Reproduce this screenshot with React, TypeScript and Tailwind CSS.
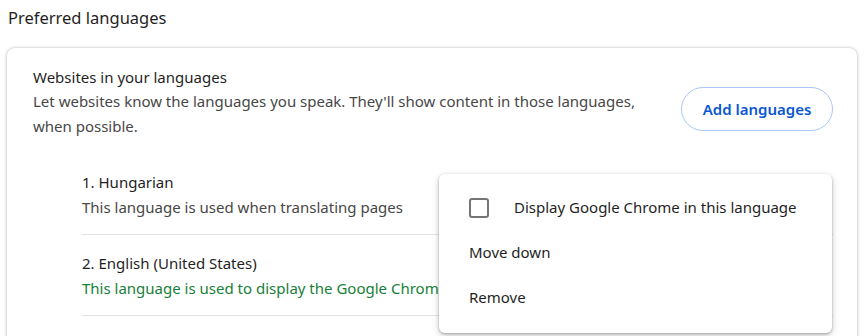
import { useState } from "react";

const languages = [
  { name: "1. Hungarian", note: "This language is used when translating pages", green: false, pad: "pt-0 pb-[14px]" },
  { name: "2. English (United States)", note: "This language is used to display the Google Chrome UI", green: true, pad: "pt-[16px] pb-[14px]" },
];

export default function App() {
  const [checked, setChecked] = useState(false);

  return (
    <div className="h-[336px] w-[867px] overflow-hidden bg-white font-['Noto_Sans',sans-serif] text-[15px] text-[#474747]">
      <h2 className="pl-[8px] pt-[6px] text-[16.5px] leading-[24px] text-[#1f1f1f]">Preferred languages</h2>
      <div className="relative ml-[7px] mt-[18px] h-[400px] w-[850px] rounded-[8px] bg-white shadow-[0_0_3px_rgba(0,0,0,0.25),0_1px_4px_rgba(0,0,0,0.1)]">
        <div className="flex items-center justify-between pl-[26px] pr-[24px] pt-[17px]">
          <div className="w-[620px]">
            <div className="leading-[24px] text-[#1f1f1f]">Websites in your languages</div>
            <div className="leading-[25px]">
              Let websites know the languages you speak. They'll show content in those languages, when possible.
            </div>
          </div>
          <button className="mt-[14px] h-[44px] w-[152px] rounded-full border border-[#a8c7fa] text-[15px] font-semibold text-[#0b57d0]">
            Add languages
          </button>
        </div>

        <div className="ml-[75px] mt-[31px] mr-[24px]">
          {languages.map((lang) => (
            <div key={lang.name} className={`border-b border-[#e3e3e3] ${lang.pad}`}>
              <div className="leading-[25px] text-[#1f1f1f]">{lang.name}</div>
              <div className={lang.green ? "leading-[25px] text-[#188038]" : "leading-[25px]"}>{lang.note}</div>
            </div>
          ))}
        </div>

        <div className="absolute left-[432px] top-[126px] w-[393px] rounded-[6px] bg-white pb-[13px] pt-[11px] shadow-[0_1px_3px_rgba(0,0,0,0.3),0_3px_8px_rgba(0,0,0,0.15)]">
          <label className="flex h-[45px] items-center pl-[30px] text-[#1f1f1f]">
            <span
              onClick={() => setChecked(!checked)}
              className="mr-[25px] h-[20px] w-[20px] rounded-[3px] border-2 border-[#757575]"
            />
            Display Google Chrome in this language
          </label>
          <div className="flex h-[45px] items-center pl-[30px] text-[#1f1f1f]">Move down</div>
          <div className="flex h-[45px] items-center pl-[30px] text-[#1f1f1f]">Remove</div>
        </div>
      </div>
    </div>
  );
}
